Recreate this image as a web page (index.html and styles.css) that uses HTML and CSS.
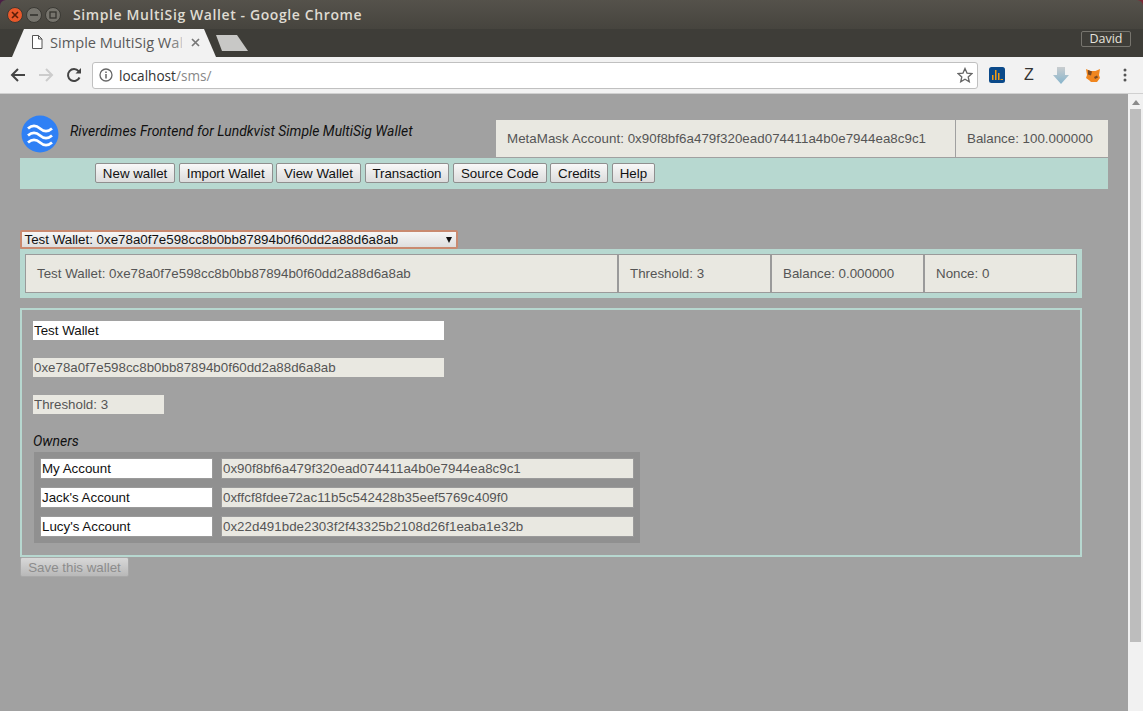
FILE: index.html
```html
<!DOCTYPE html>
<html lang="en">

<head>
  <meta charset="UTF-8">
  <title>Simple MultiSig Wallet</title>
  <link rel="stylesheet" href="styles.css">
</head>

<body>
  <header class="chrome">
    <div class="titlebar">
      <div class="winbtns">
        <span class="winbtn close"><svg width="8" height="8" viewBox="0 0 8 8"><path d="M1 1l6 6M7 1l-6 6" stroke="#5a1d08" stroke-width="1.600"/></svg></span>
        <span class="winbtn"><svg width="8" height="8" viewBox="0 0 8 8"><path d="M0 4h8" stroke="#35342f" stroke-width="1.600"/></svg></span>
        <span class="winbtn"><svg width="8" height="8" viewBox="0 0 8 8"><rect x="1" y="1" width="6" height="6" fill="none" stroke="#35342f" stroke-width="1.300"/></svg></span>
      </div>
      <span class="wintitle">Simple MultiSig Wallet - Google Chrome</span>
    </div>

    <div class="tabstrip">
      <div class="tab">
        <svg class="tabicon" width="12" height="14" viewBox="0 0 12 14"><path d="M1.500.5h6l3.500 3.500v9.500h-9.500zM7.500.5v3.500h3.500" fill="#fff" stroke="#555"/></svg>
        <span class="tabtitle">Simple MultiSig W<span class="fade1">a</span><span class="fade2">l</span></span>
        <svg class="tabclose" width="9" height="9" viewBox="0 0 9 9"><path d="M1 1l7 7M8 1l-7 7" stroke="#777" stroke-width="1.700"/></svg>
      </div>
      <span class="newtab"></span>
      <span class="profile">David</span>
    </div>

    <div class="toolbar">
      <svg class="navicon" width="16" height="16" viewBox="0 0 16 16"><path d="M15 8H2M8 2L2 8l6 6" fill="none" stroke="#444" stroke-width="2"/></svg>
      <svg class="navicon" width="16" height="16" viewBox="0 0 16 16"><path d="M1 8h13M8 2l6 6-6 6" fill="none" stroke="#ccc" stroke-width="2"/></svg>
      <svg class="navicon" width="16" height="16" viewBox="0 0 16 16"><path d="M13.500 10.500A6 6 0 1 1 12.600 4.200" fill="none" stroke="#444" stroke-width="2"/><path d="M9.500 6.500h5.500v-5.500z" fill="#444"/></svg>
      <div class="omnibox">
        <svg width="14" height="14" viewBox="0 0 14 14"><circle cx="7" cy="7" r="6" fill="none" stroke="#666" stroke-width="1.300"/><path d="M7 6v4.500M7 3.500v1.500" stroke="#666" stroke-width="1.500"/></svg>
        <span class="url">localhost<span class="urlpath">/sms/</span></span>
        <svg class="star" width="16" height="16" viewBox="0 0 16 16"><path d="M8 1.500l2 4.600 5 .5-3.800 3.300 1.100 4.900L8 12.300l-4.300 2.500 1.100-4.900L1 6.600l5-.5z" fill="none" stroke="#666" stroke-width="1.300"/></svg>
      </div>
      <div class="extensions">
        <span class="ext"><svg width="16" height="16" viewBox="0 0 16 16"><rect width="16" height="16" rx="2.500" fill="#0b4a8a"/><path d="M3 8h1.500v5H3zM6 3h1.500v10H6zM9 6h1.500v7H9zM11.500 12h2.500v1h-2.500z" fill="#f39c12"/></svg></span>
        <span class="ext ext-z">Z</span>
        <span class="ext"><svg width="16" height="17" viewBox="0 0 16 17"><defs><linearGradient id="dl" x1="0" y1="0" x2="0" y2="1"><stop offset="0" stop-color="#c9cdcf"/><stop offset="1" stop-color="#86b4cc"/></linearGradient></defs><path d="M4 0h8v8h4l-8 9-8-9h4z" fill="url(#dl)"/></svg></span>
        <span class="ext"><svg width="14" height="14" viewBox="0 0 14 14"><path d="M0 1l4.500 2h5L14 1l-1 6 1 3-3 4H5l-1.500-1.500L0 10l1-3z" fill="#f0861f"/><path d="M2 2l4 1.500-1 4-3-1zM8 9l3-1.500 1 2-3 1.500z" fill="#7a4a24"/></svg></span>
        <span class="ext"><svg width="4" height="14" viewBox="0 0 4 14"><circle cx="2" cy="2" r="1.500" fill="#555"/><circle cx="2" cy="7" r="1.500" fill="#555"/><circle cx="2" cy="12" r="1.500" fill="#555"/></svg></span>
      </div>
    </div>
  </header>

  <div class="viewport">
    <main class="page">
      <section class="topline">
        <svg class="logo" width="38" height="38" viewBox="0 0 38 38">
          <circle cx="19" cy="19" r="18.500" fill="#2f80f5"/>
          <path d="M7 13.500c4-3.500 8-3.500 12 0s8 3.500 12 0M7 20.500c4-3.500 8-3.500 12 0s8 3.500 12 0M7 27.500c4-3.500 8-3.500 12 0s8 3.500 12 0" fill="none" stroke="#fff" stroke-width="2.800"/>
        </svg>
        <h1 class="apptitle">Riverdimes Frontend for Lundkvist Simple MultiSig Wallet</h1>
        <div class="accountinfo">
          <span class="cell cell-account">MetaMask Account: 0x90f8bf6a479f320ead074411a4b0e7944ea8c9c1</span>
          <span class="cell cell-balance">Balance: 100.000000</span>
        </div>
      </section>

      <nav class="menubar">
        <button>New wallet</button>
        <button>Import Wallet</button>
        <button>View Wallet</button>
        <button>Transaction</button>
        <button>Source Code</button>
        <button>Credits</button>
        <button>Help</button>
      </nav>

      <div class="walletselect">
        <span>Test Wallet: 0xe78a0f7e598cc8b0bb87894b0f60dd2a88d6a8ab</span>
        <span class="arrow"></span>
      </div>

      <section class="walletinfo">
        <span class="wcell">Test Wallet: 0xe78a0f7e598cc8b0bb87894b0f60dd2a88d6a8ab</span>
        <span class="wcell">Threshold: 3</span>
        <span class="wcell">Balance: 0.000000</span>
        <span class="wcell">Nonce: 0</span>
      </section>

      <section class="walletform">
        <input class="field field-edit" value="Test Wallet">
        <input class="field" value="0xe78a0f7e598cc8b0bb87894b0f60dd2a88d6a8ab" readonly>
        <input class="field field-short" value="Threshold: 3" readonly>
        <h4 class="ownerstitle">Owners</h4>
        <div class="owners">
          <div class="owner">
            <input class="ownername" value="My Account">
            <input class="owneraddr" value="0x90f8bf6a479f320ead074411a4b0e7944ea8c9c1" readonly>
          </div>
          <div class="owner">
            <input class="ownername" value="Jack's Account">
            <input class="owneraddr" value="0xffcf8fdee72ac11b5c542428b35eef5769c409f0" readonly>
          </div>
          <div class="owner">
            <input class="ownername" value="Lucy's Account">
            <input class="owneraddr" value="0x22d491bde2303f2f43325b2108d26f1eaba1e32b" readonly>
          </div>
        </div>
      </section>

      <button class="savebtn" disabled>Save this wallet</button>
    </main>

    <div class="scrollbar">
      <span class="scrollup"></span>
      <span class="thumb"></span>
    </div>
  </div>
</body>

</html>
```

FILE: styles.css
```css
* {
  box-sizing: border-box;
}

html, body {
  margin: 0;
  height: 711px;
  overflow: hidden;
}

body {
  display: flex;
  flex-direction: column;
  font-family: "Liberation Sans", Arial, sans-serif;
  font-size: 13.33px;
  background: #a1a1a1;
}

/* browser window */
.chrome {
  height: 94px;
  flex: none;
  background: linear-gradient(90deg, #4a1f45, #7a2a35);
}

.titlebar {
  height: 29px;
  display: flex;
  align-items: center;
  padding: 0 0 0 7px;
  background: linear-gradient(#55524b, #46443e);
  border-radius: 6px 6px 0 0;
}

.winbtns {
  display: flex;
  gap: 3px;
}

.winbtn {
  width: 16px;
  height: 16px;
  border-radius: 50%;
  display: flex;
  align-items: center;
  justify-content: center;
  background: #76746d;
  border: 1px solid #3a3934;
}

.winbtn.close {
  background: #e8582a;
}

.wintitle {
  margin-left: 12px;
  color: #dfdbd2;
  font-family: "Open Sans", sans-serif;
  font-weight: 600;
  font-size: 14px;
  letter-spacing: .6px;
}

.tabstrip {
  height: 28px;
  display: flex;
  background: #3e3d38;
  position: relative;
}

.tab {
  width: 204px;
  margin-left: 12px;
  height: 28px;
  display: flex;
  align-items: center;
  padding: 0 0 2px 19px;
  background: #f2f2f2;
  clip-path: polygon(0 100%, 12px 0, 192px 0, 100% 100%);
}

.tabtitle {
  margin-left: 7px;
  width: 132px;
  overflow: hidden;
  white-space: nowrap;
  color: #5a5a5a;
  font-family: "Open Sans", sans-serif;
  font-size: 14.600px;
}

.fade1 {
  opacity: .7;
}

.fade2 {
  opacity: .3;
}

.tabclose {
  margin-left: 9px;
}

.newtab {
  width: 32px;
  height: 16px;
  margin: 6px 0 0 0;
  background: #c8c8c6;
  clip-path: polygon(0 0, 21px 0, 100% 100%, 6px 100%);
}

.profile {
  position: absolute;
  left: 1081px;
  top: 2px;
  width: 50px;
  height: 16px;
  border: 1px solid #77756e;
  border-radius: 2px;
  color: #e6e3dc;
  font-family: "Open Sans", sans-serif;
  font-size: 12.500px;
  line-height: 14px;
  text-align: center;
}

.toolbar {
  height: 37px;
  display: flex;
  align-items: center;
  padding-left: 10px;
  background: #f2f2f2;
  border-bottom: 1px solid #d0d0d0;
}

.navicon {
  margin-right: 12px;
  flex: none;
}

.omnibox {
  flex: none;
  width: 886px;
  height: 27px;
  margin-left: -2px;
  display: flex;
  align-items: center;
  gap: 6px;
  padding: 0 4px 0 6px;
  background: #fff;
  border: 1px solid #c0c0c0;
  border-radius: 3px;
}

.url {
  flex: 1;
  color: #333;
  font-family: "Open Sans", sans-serif;
  font-size: 13.600px;
}

.urlpath {
  color: #888;
}

.extensions {
  flex: none;
  display: flex;
  align-items: center;
  margin-left: 3px;
}

.ext {
  width: 32px;
  display: flex;
  justify-content: center;
}

.ext-z {
  font-size: 16px;
  color: #333;
}

/* page */
.viewport {
  flex: 1;
  display: flex;
}

.page {
  flex: 1;
  padding: 22px 20px 0 20px;
}

.topline {
  display: flex;
  height: 42px;
  padding-left: 1px;
}

.logo {
  margin-top: -1px;
}

.apptitle {
  margin: 7px 0 0 11px;
  width: 426px;
  font-family: Roboto, sans-serif;
  font-style: italic;
  font-weight: 400;
  font-size: 13.930px;
  line-height: 17px;
  color: #111;
}

.accountinfo {
  display: flex;
  height: 38px;
  margin-top: 4px;
  color: #555;
  background: #e9e8e1;
  border-bottom: 1px solid #a0a0a0;
}

.cell {
  padding: 11px 11px;
  white-space: nowrap;
}

.cell-account {
  width: 460px;
  border-right: 1px solid #a0a0a0;
  letter-spacing: .035px;
}

.cell-balance {
  width: 152px;
}

.menubar {
  height: 31px;
  padding: 5px 0 0 75px;
  background: #b7d8d0;
}

button {
  height: 20px;
  padding: 0 6.850px;
  font: inherit;
  color: #111;
  background: linear-gradient(#f8f8f8, #dcdcdc);
  border: 1px solid #8f8f8f;
  border-radius: 2px;
}

.walletselect {
  display: flex;
  justify-content: space-between;
  align-items: center;
  width: 438px;
  height: 19px;
  margin-top: 41px;
  padding: 0 3.500px 0 2.500px;
  color: #111;
  background: linear-gradient(#f6f6f6, #dedede);
  border: 2px solid #c98a70;
  border-radius: 2px;
}

.arrow {
  margin-right: 1px;
  border-style: solid;
  border-width: 6px 3.500px 0;
  border-color: #111 transparent transparent;
}

.walletinfo {
  display: grid;
  grid-template-columns: 593px 153px 153px 153px;
  grid-template-rows: 39px;
  width: 1062px;
  height: 49px;
  padding: 5px;
  background: #b7d8d0;
}

.wcell {
  padding: 11px;
  color: #555;
  background: #e9e8e1;
  border: 1px solid #9a9a9a;
  white-space: nowrap;
}

.walletform {
  display: flex;
  flex-direction: column;
  align-items: flex-start;
  width: 1062px;
  height: 249px;
  margin-top: 10px;
  padding: 11px 11px;
  border: 2px solid #b7d8d0;
}

input {
  font: inherit;
  border: 0;
  outline: 0;
  padding: 0 1px;
}

.field {
  width: 411px;
  height: 19px;
  margin-bottom: 18px;
  color: #555;
  background: #e9e8e1;
}

.field-edit {
  color: #111;
  background: #fff;
}

.field-short {
  width: 131px;
  margin-bottom: 0;
}

.ownerstitle {
  margin: 19px 0 3px;
  font-family: Roboto, sans-serif;
  font-style: italic;
  font-weight: 400;
  font-size: 14px;
  line-height: 16px;
  color: #111;
}

.owners {
  display: flex;
  flex-direction: column;
  gap: 8px;
  width: 606px;
  height: 91px;
  margin-left: 1px;
  padding: 6px;
  background: #909090;
}

.owner {
  display: flex;
  gap: 8px;
}

.ownername, .owneraddr {
  height: 21px;
  border: 1px solid #9a9a9a;
}

.ownername {
  width: 173px;
  color: #111;
  background: #fff;
}

.owneraddr {
  width: 413px;
  color: #555;
  background: #e9e8e1;
  letter-spacing: .02px;
}

.savebtn {
  display: block;
  width: 109px;
  padding: 0;
  color: #8c8c8c;
  background: linear-gradient(#d8d8d8, #b8b8b8);
  border-color: #a8a8a8;
}

/* scrollbar */
.scrollbar {
  width: 15px;
  flex: none;
  padding: 6px 2px 0;
  background: #f1f1f1;
}

.scrollup {
  display: block;
  width: 0;
  height: 5px;
  margin: 0 auto 4px;
  border-style: solid;
  border-width: 0 4px 5px;
  border-color: transparent transparent #8a8a8a;
}

.thumb {
  display: block;
  height: 533px;
  background: #bdbdbd;
}
```
